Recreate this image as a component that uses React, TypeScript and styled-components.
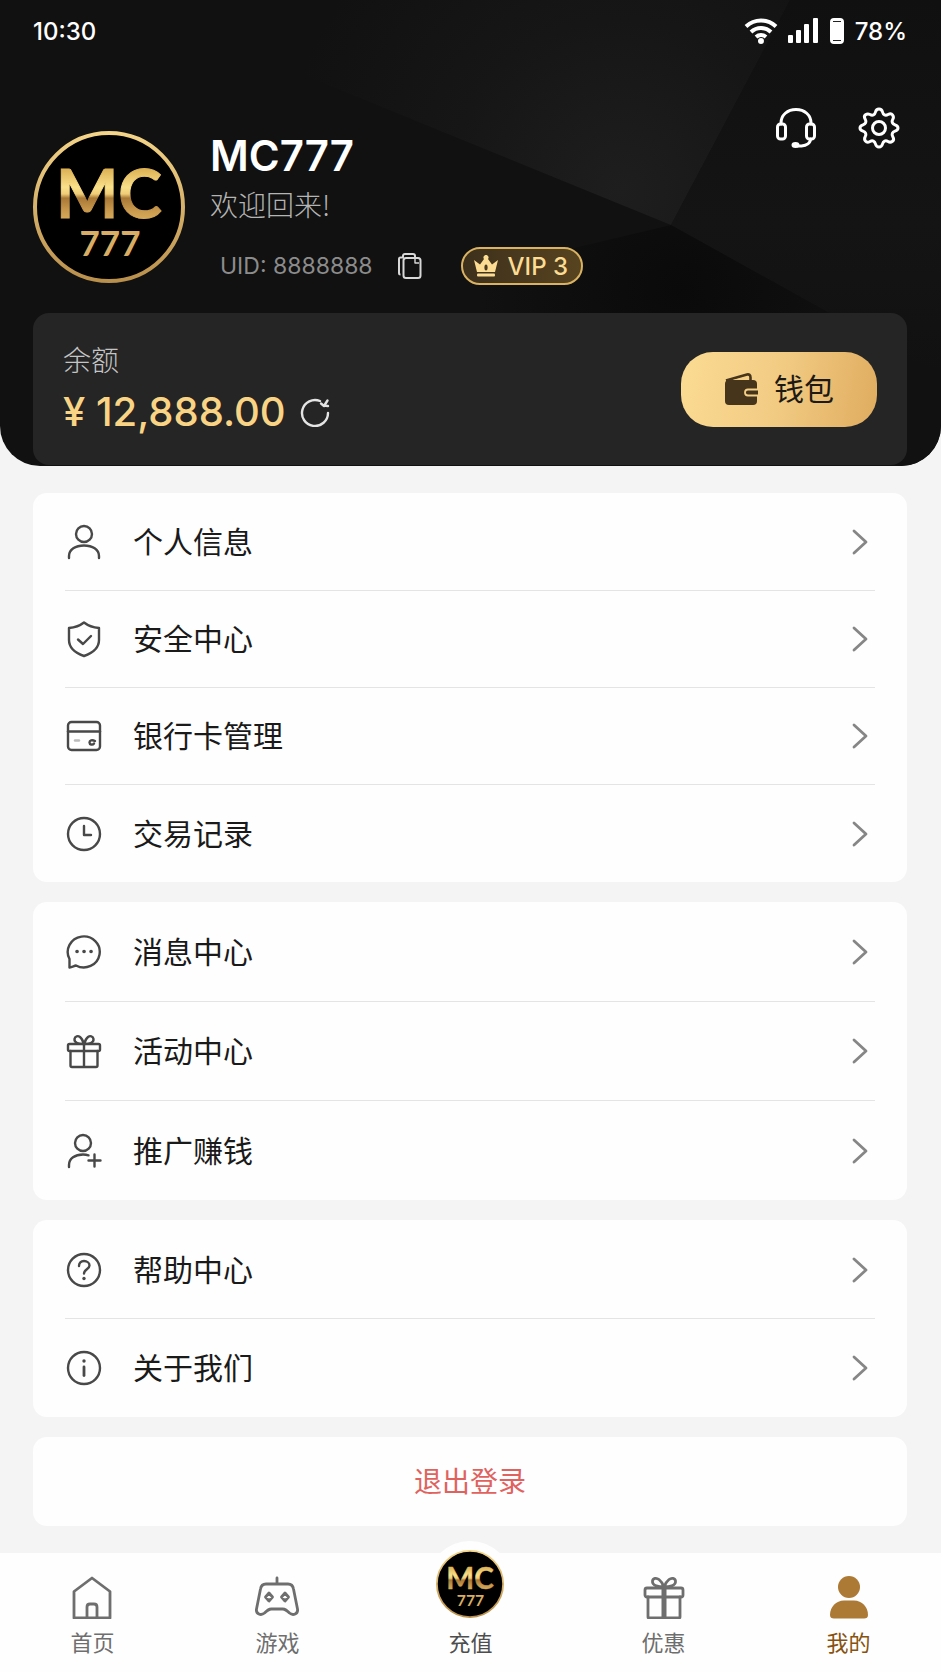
import React from 'react';
import styled, { createGlobalStyle } from 'styled-components';

const UI_FAMILY = "Inter, 'Noto Sans CJK SC', sans-serif";
const CJK_FAMILY = "'Noto Sans CJK SC', sans-serif";

const GlobalStyle = createGlobalStyle`
  * {
    box-sizing: border-box;
  }
  body {
    margin: 0;
    background: #f4f4f4;
    color: #1a1a1a;
    font-family: ${UI_FAMILY};
  }
  button {
    border: 0;
    padding: 0;
    background: none;
    color: inherit;
    font: inherit;
    cursor: pointer;
  }
  a {
    color: inherit;
    text-decoration: none;
  }
  svg {
    display: block;
    flex-shrink: 0;
  }
`;

const Page = styled.div`
  min-height: 100vh;
  display: flex;
  flex-direction: column;
`;

const Header = styled.header`
  position: relative;
  overflow: hidden;
  padding: 0 34px 1px 33px;
  border-radius: 0 0 40px 40px;
  background: #111;
  color: #fff;
`;

const Facets = styled.svg`
  position: absolute;
  inset: 0;
  width: 100%;
  height: 100%;
`;

const StatusBar = styled.div`
  position: relative;
  display: flex;
  align-items: center;
  justify-content: space-between;
  height: 62px;
  font-size: 24px;
  font-weight: 500;
`;

const StatusIcons = styled.div`
  display: flex;
  align-items: center;
  gap: 10px;
`;

const Profile = styled.section`
  position: relative;
  display: flex;
  align-items: flex-start;
  padding: 45px 7px 28px 0;
`;

const Avatar = styled.div`
  padding-top: 24px;
`;

const Info = styled.div`
  flex: 1;
  padding: 24px 0 0 25px;
`;

const Name = styled.h1`
  margin: 0;
  font-size: 42px;
  font-weight: 600;
  line-height: 50px;
`;

const Welcome = styled.p`
  margin: 0 0 20px;
  color: #b4b4b4;
  font-family: ${CJK_FAMILY};
  font-size: 28px;
  font-weight: 300;
  line-height: 46px;
`;

const Meta = styled.div`
  display: flex;
  align-items: center;
  height: 38px;
  padding-left: 10px;
`;

const Uid = styled.span`
  color: #8c8c8c;
  font-size: 23px;
`;

const CopyButton = styled.button`
  margin: 0 39px 0 24px;
`;

const VipBadge = styled.span`
  display: flex;
  align-items: center;
  gap: 9px;
  height: 38px;
  padding: 0 13px 0 10px;
  border: 2px solid #d9b262;
  border-radius: 19px;
  background: linear-gradient(90deg, #3d301c, #57431f);
  color: #fbdc92;
  font-size: 24px;
  font-weight: 500;
`;

const Actions = styled.div`
  display: flex;
  gap: 41px;
`;

const Balance = styled.section`
  position: relative;
  display: flex;
  align-items: center;
  justify-content: space-between;
  min-height: 152px;
  padding: 0 30px;
  border-radius: 16px;
  background: #252525;
`;

const BalanceLabel = styled.div`
  margin-bottom: 8px;
  color: #c4c4c4;
  font-size: 28px;
  font-weight: 300;
  line-height: 38px;
`;

const Amount = styled.div`
  display: flex;
  align-items: center;
  gap: 14px;
  color: #fad485;
  font-size: 40px;
  font-weight: 500;
  line-height: 48px;
`;

const WalletButton = styled.button`
  display: flex;
  align-items: center;
  justify-content: center;
  gap: 16px;
  width: 196px;
  height: 75px;
  border-radius: 32px;
  background: linear-gradient(100deg, #fbdb92, #f2cb83 50%, #dfac5f);
  color: #1d1a15;
  font-size: 30px;
  line-height: 40px;
`;

const Main = styled.main`
  flex: 1;
  display: flex;
  flex-direction: column;
  gap: 20px;
  padding: 27px 34px 27px 33px;
`;

const Card = styled.nav`
  padding: 1px 32px 0;
  border-radius: 14px;
  background: #fefefe;
`;

const Row = styled.a<{ $height: number }>`
  display: flex;
  align-items: center;
  gap: 30px;
  height: ${(p) => p.$height}px;
  font-size: 30px;
  line-height: 40px;
  &:not(:last-child) {
    border-bottom: 1px solid #e4e4e4;
  }
`;

const RowLabel = styled.span`
  flex: 1;
`;

const LogoutButton = styled.button`
  height: 89px;
  border-radius: 14px;
  background: #fefefe;
  color: #e0625e;
  font-size: 28px;
  line-height: 40px;
`;

const TabBar = styled.nav`
  display: grid;
  grid-template-columns: 23fr 23fr 25fr 23fr 23fr;
  height: 119px;
  background: #fefefe;
`;

const Tab = styled.a<{ $color?: string }>`
  position: relative;
  display: flex;
  flex-direction: column;
  align-items: center;
  justify-content: flex-end;
  gap: 8px;
  padding-bottom: 13px;
  color: ${(p) => p.$color || '#6e6e6e'};
  font-size: 22px;
  line-height: 32px;
`;

const TabLogo = styled.span`
  position: absolute;
  top: -12px;
  padding: 9px;
  border-radius: 50%;
  background: #fefefe;
`;

const Logo: React.FC<{ size: number; id: string }> = ({ size, id }) => (
  <svg width={size} height={size} viewBox="0 0 152 152" role="img" aria-label="MC777">
    <defs>
      <linearGradient id={`${id}-ring`} x1="0" y1="0" x2="0" y2="1">
        <stop offset="0" stopColor="#f3d488" />
        <stop offset="1" stopColor="#b98f4c" />
      </linearGradient>
      <linearGradient id={`${id}-mc`} x1="0" y1="38" x2="0" y2="90" gradientUnits="userSpaceOnUse">
        <stop offset="0" stopColor="#dcb154" />
        <stop offset="0.35" stopColor="#fae08a" />
        <stop offset="0.48" stopColor="#f0cd78" />
        <stop offset="0.56" stopColor="#a87836" />
        <stop offset="0.8" stopColor="#c99a4e" />
        <stop offset="1" stopColor="#d9ae5c" />
      </linearGradient>
    </defs>
    <circle cx="76" cy="76" r="74" fill="#000" stroke={`url(#${id}-ring)`} strokeWidth="4" />
    <text textAnchor="middle" fontFamily="Lato, sans-serif" fontWeight="700">
      <tspan x="76" y="87" fontSize="66" fill={`url(#${id}-mc)`} stroke={`url(#${id}-mc)`}>
        MC
      </tspan>
      <tspan x="77" y="125" fontSize="35" fill="#d9ae64">
        777
      </tspan>
    </text>
  </svg>
);

type LineIconProps = {
  size?: number;
  color?: string;
  width?: number;
  children: React.ReactNode;
};

const LineIcon: React.FC<LineIconProps> = ({
  size = 38,
  color = '#484848',
  width = 2.4,
  children,
}) => (
  <svg
    width={size}
    height={size}
    viewBox={`0 0 ${size} ${size}`}
    fill="none"
    stroke={color}
    strokeWidth={width}
    strokeLinecap="round"
    strokeLinejoin="round"
    aria-hidden="true"
  >
    {children}
  </svg>
);

const icons = {
  user: (
    <>
      <circle cx="19" cy="11" r="8" />
      <path d="M4 35v-2c0-6.500 6.500-10.500 15-10.500s15 4 15 10.500v2" />
    </>
  ),
  shield: (
    <>
      <path d="M19 2.500C14.500 6 9.500 7.500 4 8v12c0 8 6.500 13 15 16 8.500-3 15-8 15-16V8c-5.500-.5-10.500-2-15-5.500z" />
      <path d="M13 19.500l5 4.500 8-8" />
    </>
  ),
  card: (
    <>
      <rect x="3" y="5" width="32" height="28" rx="3.500" />
      <path d="M3 14.500h32" />
      <path d="M10 23.500h4" stroke="#bbb" />
      <path d="M30 24c-3-1.500-5.500-.5-5.500 1.500s3 3 4.500 1" />
    </>
  ),
  clock: (
    <>
      <circle cx="19" cy="19" r="16" />
      <path d="M19 11v9h7" />
    </>
  ),
  message: (
    <>
      <path d="M4.500 34.500v-8.500A16 15.500 0 1 1 11 32.500c-2 .5-4 1.500-6.500 2z" />
      <path d="M12 18.500h.1M19 18.500h.1M26 18.500h.1" strokeWidth="3.600" />
    </>
  ),
  gift: (
    <>
      <rect x="3" y="12" width="32" height="7" rx="1.500" />
      <path d="M5.500 19v14.500c0 1 .5 1.500 1.500 1.500h24c1 0 1.500-.5 1.500-1.500V19M19 12v23" />
      <path d="M19 12c-5 0-10-1-9.500-5 .5-3 3.500-3.500 5.500-2 2 1.500 3 4 4 7 1-3 2-5.500 4-7s5-1 5.500 2c.5 4-4.500 5-9.500 5z" />
    </>
  ),
  invite: (
    <>
      <circle cx="18" cy="11" r="8" />
      <path d="M4 35v-2c0-6.500 6-10.500 14-10.500 2 0 4 .3 5.500.8M29.500 22.500v12M23.500 28.500h12" />
    </>
  ),
  help: (
    <>
      <circle cx="19" cy="19" r="16" />
      <path d="M14 15c0-3 2-5 5-5s5.500 2 5.500 4.500c0 3.500-5.500 4-5.500 8" />
      <path d="M19 27.500v.1" strokeWidth="3.400" />
    </>
  ),
  info: (
    <>
      <circle cx="19" cy="19" r="16" />
      <path d="M19 18v8.500" strokeWidth="2.800" />
      <path d="M19 12v.1" strokeWidth="3.400" />
    </>
  ),
};

type MenuItem = { icon: keyof typeof icons; label: string };

const groups: { rowHeight: number; items: MenuItem[] }[] = [
  {
    rowHeight: 97,
    items: [
      { icon: 'user', label: '个人信息' },
      { icon: 'shield', label: '安全中心' },
      { icon: 'card', label: '银行卡管理' },
      { icon: 'clock', label: '交易记录' },
    ],
  },
  {
    rowHeight: 99,
    items: [
      { icon: 'message', label: '消息中心' },
      { icon: 'gift', label: '活动中心' },
      { icon: 'invite', label: '推广赚钱' },
    ],
  },
  {
    rowHeight: 98,
    items: [
      { icon: 'help', label: '帮助中心' },
      { icon: 'info', label: '关于我们' },
    ],
  },
];

const App: React.FC = () => {
  return (
    <Page>
      <GlobalStyle />
      <Header>
        <Facets viewBox="0 0 941 466" preserveAspectRatio="none" aria-hidden="true">
          <defs>
            <radialGradient id="facet-light" cx="620" cy="190" r="340" gradientUnits="userSpaceOnUse">
              <stop offset="0" stopColor="#1e1e1e" />
              <stop offset="0.5" stopColor="#161616" />
              <stop offset="1" stopColor="#111" />
            </radialGradient>
            <radialGradient id="facet-dark" cx="680" cy="290" r="200" gradientUnits="userSpaceOnUse">
              <stop offset="0" stopColor="#0a0a0a" />
              <stop offset="1" stopColor="#111" />
            </radialGradient>
            <linearGradient id="facet-right" x1="0" y1="0" x2="0" y2="1">
              <stop offset="0" stopColor="#101010" />
              <stop offset="0.6" stopColor="#141414" />
              <stop offset="1" stopColor="#111" />
            </linearGradient>
          </defs>
          <path d="M120 0h670L671 225 470 143z" fill="url(#facet-light)" />
          <path d="M790 0h151v375L671 225z" fill="url(#facet-right)" />
          <path d="M671 225l270 150v91H460V275z" fill="url(#facet-dark)" />
        </Facets>
        <StatusBar>
          <span>10:30</span>
          <StatusIcons>
            <svg width="34" height="26" viewBox="0 0 34 26" fill="none" stroke="#fff" strokeWidth="4" aria-hidden="true">
              <path d="M2 8.500C10.500.5 23.500.5 32 8.500" />
              <path d="M7 14c5.800-5.300 14.200-5.300 20 0" />
              <path d="M12 19c3-2.600 7-2.600 10 0" />
              <circle cx="17" cy="23" r="3" fill="#fff" stroke="none" />
            </svg>
            <svg width="31" height="26" viewBox="0 0 31 26" fill="#fff" aria-hidden="true">
              <rect x="0" y="17" width="5" height="8" rx="1" />
              <rect x="8" y="12" width="5" height="13" rx="1" />
              <rect x="16" y="6" width="5" height="19" rx="1" />
              <rect x="25" y="0" width="5" height="25" rx="1" />
            </svg>
            <svg width="16" height="26" viewBox="0 0 16 26" aria-hidden="true">
              <rect x="2" y="1" width="12" height="24" rx="3" fill="#fff" stroke="#fff" strokeWidth="2" />
              <path d="M4 3.500h8M4 22.500h8" stroke="#222" strokeWidth="1.200" />
            </svg>
            <span>78%</span>
          </StatusIcons>
        </StatusBar>
        <Profile>
          <Avatar>
            <Logo size={152} id="avatar" />
          </Avatar>
          <Info>
            <Name>MC777</Name>
            <Welcome>欢迎回来!</Welcome>
            <Meta>
              <Uid>UID: 8888888</Uid>
              <CopyButton aria-label="复制 UID">
                <svg width="25" height="28" viewBox="0 0 25 28" fill="none" stroke="#d8d8d8" strokeWidth="2" strokeLinejoin="round">
                  <rect x="6.500" y="6" width="17" height="20" rx="2.500" />
                  <path d="M3.500 22.500c-1 0-1.500-.5-1.500-1.500V7c0-1 .5-1.500 1.500-1.500H6V4c0-1.300.700-2 2-2h8c1.300 0 2 .7 2 2v2" />
                  <path d="M18 6v5h4" strokeWidth="1.400" />
                </svg>
              </CopyButton>
              <VipBadge>
                <svg width="26" height="22" viewBox="0 0 26 22" fill="#fbdc92" aria-hidden="true">
                  <path d="M1 5l6 4.500L11 4a2.500 2.500 0 1 1 4 0l4 5.500L25 5l-3 12H4z" />
                  <rect x="4" y="18.500" width="18" height="3" rx="1" />
                  <ellipse cx="13" cy="12.500" rx="1.600" ry="3" fill="#4a3a20" />
                </svg>
                VIP 3
              </VipBadge>
            </Meta>
          </Info>
          <Actions>
            <button aria-label="客服">
              <LineIcon size={42} color="#fff" width={3}>
                <path d="M6 17v-1C6 8 12.500 2.500 21 2.500S36 8 36 16v1" />
                <rect x="2.500" y="17" width="8" height="15" rx="3" />
                <rect x="31.500" y="17" width="8" height="15" rx="3" />
                <path d="M35.500 32c0 4-4 6.500-9 7h-4" />
                <ellipse cx="20.500" cy="38" rx="2.500" ry="1.500" fill="#fff" />
              </LineIcon>
            </button>
            <button aria-label="设置">
              <LineIcon size={42} color="#fff" width={3}>
                <circle cx="21" cy="21" r="6.500" />
                <path d="M21 2c2 0 3 1 3.500 3 .7 3 3 4 5.500 2.500 2-1 3.500-1 4.500.3s1.500 2.500.3 4.500c-1.500 2.500-.5 4.500 2.200 5.500 2 .7 3 1.700 3 3.200s-1 2.500-3 3.200c-2.700 1-3.700 3-2.200 5.500 1.200 2 1 3.500-.3 4.500s-2.500 1.500-4.500.3c-2.500-1.500-4.800-.5-5.500 2.500-.5 2-1.500 3-3.500 3s-3-1-3.500-3c-.7-3-3-4-5.500-2.500-2 1.200-3.500 1-4.500-.3s-1.500-2.500-.3-4.500c1.500-2.500.5-4.500-2.200-5.500-2-.7-3-1.700-3-3.200s1-2.500 3-3.200c2.700-1 3.700-3 2.200-5.500-1.200-2-1-3.500.3-4.500s2.500-1.300 4.500-.3c2.500 1.500 4.800.5 5.500-2.500.5-2 1.500-3 3.500-3z" />
              </LineIcon>
            </button>
          </Actions>
        </Profile>
        <Balance>
          <div>
            <BalanceLabel>余额</BalanceLabel>
            <Amount>
              ¥ 12,888.00
              <button aria-label="刷新余额">
                <LineIcon size={30} color="#e4e4e4" width={2.4}>
                  <path d="M28 16A13 13 0 1 1 20 4" />
                  <path d="M27.500 3.500L24 9l-3-2.500M24 8.500l4 .5" />
                </LineIcon>
              </button>
            </Amount>
          </div>
          <WalletButton>
            <svg width="34" height="34" viewBox="0 0 34 34" aria-hidden="true">
              <path d="M2 8.500L23 2.500c2-.5 3.500.5 3.500 3v3" fill="none" stroke="#46341b" strokeWidth="2.600" />
              <rect x="1" y="8" width="32" height="25" rx="4" fill="#46341b" />
              <path d="M9 8l13-3v3z" fill="#f4cf88" />
              <path d="M34 17.500H24a3 3 0 0 0 0 6h10" fill="#46341b" stroke="#f4cf88" strokeWidth="1.800" />
            </svg>
            钱包
          </WalletButton>
        </Balance>
      </Header>
      <Main>
        {groups.map((group) => (
          <Card key={group.items[0].label}>
            {group.items.map((item) => (
              <Row key={item.label} href="#" $height={group.rowHeight}>
                <LineIcon>{icons[item.icon]}</LineIcon>
                <RowLabel>{item.label}</RowLabel>
                <LineIcon size={30} color="#868686" width={2.8}>
                  <path d="M9 4l12 11L9 26" />
                </LineIcon>
              </Row>
            ))}
          </Card>
        ))}
        <LogoutButton>退出登录</LogoutButton>
      </Main>
      <TabBar>
        <Tab href="#">
          <LineIcon size={44} color="#6e6e6e" width={2.8}>
            <path d="M4 16.500L22 3l18 13.500V43H4z" />
            <path d="M17 43V32c0-2 1-3 3-3h4c2 0 3 1 3 3v11" />
          </LineIcon>
          首页
        </Tab>
        <Tab href="#">
          <LineIcon size={44} color="#6e6e6e" width={2.8}>
            <path d="M22 3v6M11 9h22c3 0 5 2 5.500 5l4 20c.8 5-4.500 7-8 4-3-3-4-4-7-4h-11c-3 0-4 1-7 4-3.500 3-8.800 1-8-4l4-20C6 11 8 9 11 9z" />
            <path d="M14 18l3.500 4-3.500 4-3.500-4zM30 18l3.500 4-3.500 4-3.500-4z" />
          </LineIcon>
          游戏
        </Tab>
        <Tab href="#" $color="#4e4e4e">
          <TabLogo>
            <Logo size={68} id="tab" />
          </TabLogo>
          充值
        </Tab>
        <Tab href="#">
          <LineIcon size={44} color="#6e6e6e" width={2.8}>
            <rect x="3" y="13" width="38" height="9" rx="2" />
            <path d="M6 22v20c0 .7.300 1 1 1h30c.7 0 1-.3 1-1V22" />
            <path d="M22 13v30" strokeWidth="5" strokeLinecap="butt" />
            <path d="M22 12c-5 0-12-1-11.500-6 .5-3 4-3.500 6.500-1.500 2.500 2 4 4.500 5 7.500 1-3 2.500-5.500 5-7.500s6-1.500 6.500 1.500c.5 5-6.500 6-11.500 6z" />
          </LineIcon>
          优惠
        </Tab>
        <Tab href="#" $color="#87520f" aria-current="page">
          <svg width="44" height="44" viewBox="0 0 44 44" fill="#ac7a35" aria-hidden="true">
            <circle cx="22" cy="12" r="11" />
            <path d="M3 40c0-8 6-14.500 14-14.500h10c8 0 14 6.500 14 14.500 0 2.500-1.500 3.500-4 3.500H7c-2.500 0-4-1-4-3.500z" />
          </svg>
          我的
        </Tab>
      </TabBar>
    </Page>
  );
};

export default App;
